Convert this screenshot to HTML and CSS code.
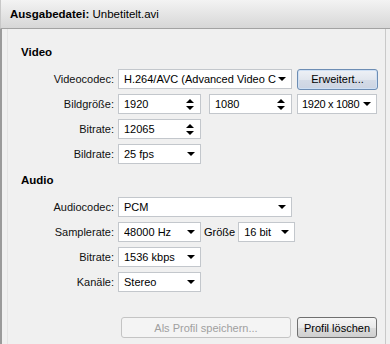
FILE: index.html
```html
<!DOCTYPE html>
<html lang="de">
<head>
<meta charset="utf-8">
<title>Ausgabedatei</title>
<link rel="stylesheet" href="styles.css">
</head>
<body>
<div class="window">
  <div class="header"><b>Ausgabedatei:</b> Unbetitelt.avi</div>
  <div class="panel">
    <div class="section-title">Video</div>
    <div class="form">
      <div class="label">Videocodec:</div>
      <div class="cell">
        <div class="combo w174"><span class="val">H.264/AVC (Advanced Video C</span><span class="arrow"></span></div>
        <div class="btn default w81">Erweitert...</div>
      </div>
      <div class="label">Bildgröße:</div>
      <div class="cell">
        <div class="spin w83"><span class="val">1920</span><span class="spinarrows"><span class="up"></span><span class="down"></span></span></div>
        <div class="spin w83 ml8"><span class="val">1080</span><span class="spinarrows"><span class="up"></span><span class="down"></span></span></div>
        <div class="combo w80 tight"><span class="val">1920 x 1080</span><span class="arrow"></span></div>
      </div>
      <div class="label">Bitrate:</div>
      <div class="cell">
        <div class="spin w83"><span class="val">12065</span><span class="spinarrows"><span class="up"></span><span class="down"></span></span></div>
      </div>
      <div class="label">Bildrate:</div>
      <div class="cell">
        <div class="combo w83"><span class="val">25 fps</span><span class="arrow"></span></div>
      </div>
    </div>
    <div class="section-title audio">Audio</div>
    <div class="form">
      <div class="label">Audiocodec:</div>
      <div class="cell">
        <div class="combo w174"><span class="val">PCM</span><span class="arrow"></span></div>
      </div>
      <div class="label">Samplerate:</div>
      <div class="cell">
        <div class="combo w83"><span class="val">48000 Hz</span><span class="arrow"></span></div>
        <span class="inline-label">Größe</span>
        <div class="combo w57"><span class="val">16 bit</span><span class="arrow"></span></div>
      </div>
      <div class="label">Bitrate:</div>
      <div class="cell">
        <div class="combo w83"><span class="val">1536 kbps</span><span class="arrow"></span></div>
      </div>
      <div class="label">Kanäle:</div>
      <div class="cell">
        <div class="combo w83"><span class="val">Stereo</span><span class="arrow"></span></div>
      </div>
    </div>
    <div class="actions">
      <div class="btn disabled w170">Als Profil speichern...</div>
      <div class="btn w80">Profil löschen</div>
    </div>
  </div>
</div>
</body>
</html>
```
FILE: styles.css
```css
* { box-sizing: border-box; }
html, body { margin: 0; padding: 0; }
body {
  width: 390px;
  height: 344px;
  overflow: hidden;
  background: #f0f0f0;
  font-family: "Liberation Sans", Arial, sans-serif;
  font-size: 11px;
  color: #000;
}
.window {
  width: 390px;
  height: 344px;
  display: flex;
  flex-direction: column;
}
.header {
  height: 29px;
  padding-left: 9px;
  line-height: 28px;
  background: linear-gradient(#f3f3f3, #d7d7d7);
  border-bottom: 1px solid #a3a3a3;
  border-left: 1px solid #c8c8c8;
  font-size: 11.5px;
}
.header b { font-weight: bold; }
.panel {
  flex: 1;
  background: #f0f0f0;
  border-left: 2px solid #9a9a9a;
  border-right: 1px solid #c9c9c9;
  margin-right: 4px;
  padding-top: 15px;
  box-shadow: inset 5px 0 0 #f0f0f0, inset 6px 0 0 #e4e4e4;
}
.section-title {
  font-weight: bold;
  height: 16px;
  line-height: 16px;
  padding-left: 19px;
  font-size: 11.5px;
}
.section-title.audio { margin-top: 8px; }
.form {
  display: grid;
  grid-template-columns: 112px 1fr;
  column-gap: 4px;
  row-gap: 5px;
  margin-top: 9px;
}
.label {
  text-align: right;
  height: 20px;
  line-height: 20px;
  color: #111;
}
.cell {
  display: flex;
  align-items: center;
  height: 20px;
}
.combo, .spin {
  height: 20px;
  background: #fff;
  border: 1px solid #c3c7cc;
  display: flex;
  align-items: center;
  padding-left: 5px;
  position: relative;
  white-space: nowrap;
  overflow: hidden;
}
.val { flex: 1; overflow: hidden; }
.arrow {
  width: 0; height: 0;
  border-left: 4px solid transparent;
  border-right: 4px solid transparent;
  border-top: 4px solid #000;
  margin: 0 5px 0 2px;
  flex: none;
}
.combo.tight { padding-left: 4px; }
.combo.tight .val { letter-spacing: -0.3px; }
.combo.tight .arrow { margin: 0 5px 0 1px; }
.spinarrows {
  display: flex;
  flex-direction: column;
  gap: 3px;
  margin-right: 6px;
  flex: none;
}
.spinarrows .up {
  width: 0; height: 0;
  border-left: 4px solid transparent;
  border-right: 4px solid transparent;
  border-bottom: 4px solid #000;
}
.spinarrows .down {
  width: 0; height: 0;
  border-left: 4px solid transparent;
  border-right: 4px solid transparent;
  border-top: 4px solid #000;
}
.btn {
  height: 21px;
  display: flex;
  align-items: center;
  justify-content: center;
  border: 1px solid #707070;
  border-radius: 3px;
  background: linear-gradient(#f6f6f6 0%, #e9e9e9 50%, #dcdcdc 51%, #cfcfcf 100%);
  white-space: nowrap;
}
.btn.default {
  border-color: #6d8db4;
  background: linear-gradient(#eef1f6 0%, #e1e6ee 50%, #d4dbe7 51%, #ccd4e2 100%);
  box-shadow: inset 0 0 0 1px #cfe0f4;
}
.btn.disabled {
  color: #a0a0a0;
  border-color: #c4c4c4;
  background: #f4f4f4;
}
.w174 { width: 174px; }
.w83 { width: 83px; }
.w81 { width: 81px; }
.w80 { width: 80px; }
.w57 { width: 57px; }
.w170 { width: 170px; }
.ml8 { margin-left: 8px; }
.cell > .btn, .cell > .combo.w80 { margin-left: 5px; }
.inline-label { margin: 0 3px 0 3px; }
.actions {
  display: flex;
  gap: 6px;
  margin-top: 25px;
  padding-left: 119px;
}
```
